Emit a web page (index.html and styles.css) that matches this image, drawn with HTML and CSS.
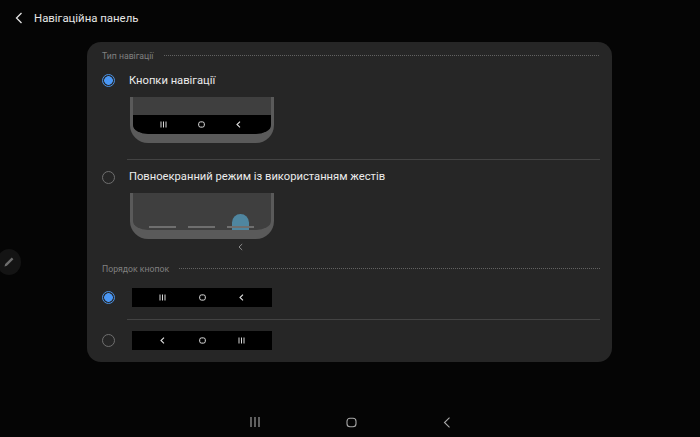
FILE: index.html
```html
<!DOCTYPE html>
<html lang="uk">
<head>
<meta charset="utf-8">
<title>Навігаційна панель</title>
<link rel="stylesheet" href="styles.css">
</head>
<body>
<div class="screen">
  <header class="topbar">
    <svg class="back" width="8" height="12" viewBox="0 0 8 12"><path d="M6.5 1 L1.5 6 L6.5 11" fill="none" stroke="#e4e4e4" stroke-width="1.3"/></svg>
    <h1 class="title">Навігаційна панель</h1>
  </header>

  <main class="card">
    <div class="section-head section-head-first"><span class="section-label">Тип навігації</span><span class="dots"></span></div>

    <div class="option">
      <span class="radio radio-on"></span>
      <span class="option-label">Кнопки навігації</span>
    </div>
    <div class="preview">
      <div class="phone">
        <div class="phone-screen"></div>
        <div class="phone-bar">
          <svg class="glyph" width="7" height="7" viewBox="0 0 7 7"><path d="M1 0.5V6.5M3.5 0.5V6.5M6 0.5V6.5" stroke="#d8d8d8" stroke-width="1"/></svg>
          <svg class="glyph" width="7" height="7" viewBox="0 0 7 7"><rect x="0.7" y="0.9" width="5.6" height="5.2" rx="1.8" fill="none" stroke="#e0e0e0" stroke-width="1"/></svg>
          <svg class="glyph" width="7" height="7" viewBox="0 0 7 7"><path d="M5 0.7L2 3.5L5 6.3" fill="none" stroke="#e0e0e0" stroke-width="1.1"/></svg>
        </div>
      </div>
    </div>

    <div class="divider divider-a"></div>

    <div class="option option-second">
      <span class="radio"></span>
      <span class="option-label">Повноекранний режим із використанням жестів</span>
    </div>
    <div class="preview preview-gesture">
      <div class="phone phone-gesture">
        <span class="gesture-blob"></span>
        <div class="gesture-lines">
          <span class="gesture-line"></span>
          <span class="gesture-line"></span>
          <span class="gesture-line"></span>
        </div>
      </div>
    </div>
    <div class="gesture-hint">
      <svg width="7" height="8" viewBox="0 0 7 8"><path d="M5.2 1L2 4L5.2 7" fill="none" stroke="#8d8d8d" stroke-width="1"/></svg>
    </div>

    <div class="section-head"><span class="section-label">Порядок кнопок</span><span class="dots"></span></div>

    <div class="order-row">
      <span class="radio radio-on"></span>
      <div class="order-bar">
        <svg class="glyph" width="7" height="7" viewBox="0 0 7 7"><path d="M1 0.5V6.5M3.5 0.5V6.5M6 0.5V6.5" stroke="#d8d8d8" stroke-width="1"/></svg>
        <svg class="glyph" width="7" height="7" viewBox="0 0 7 7"><rect x="0.7" y="0.9" width="5.6" height="5.2" rx="1.8" fill="none" stroke="#e0e0e0" stroke-width="1"/></svg>
        <svg class="glyph" width="7" height="7" viewBox="0 0 7 7"><path d="M5 0.7L2 3.5L5 6.3" fill="none" stroke="#e0e0e0" stroke-width="1.1"/></svg>
      </div>
    </div>
    <div class="divider divider-b"></div>
    <div class="order-row order-row-last">
      <span class="radio"></span>
      <div class="order-bar">
        <svg class="glyph" width="7" height="7" viewBox="0 0 7 7"><path d="M5 0.7L2 3.5L5 6.3" fill="none" stroke="#e0e0e0" stroke-width="1.1"/></svg>
        <svg class="glyph" width="7" height="7" viewBox="0 0 7 7"><rect x="0.7" y="0.9" width="5.6" height="5.2" rx="1.8" fill="none" stroke="#e0e0e0" stroke-width="1"/></svg>
        <svg class="glyph" width="7" height="7" viewBox="0 0 7 7"><path d="M1 0.5V6.5M3.5 0.5V6.5M6 0.5V6.5" stroke="#d8d8d8" stroke-width="1"/></svg>
      </div>
    </div>
  </main>

  <nav class="navbar">
    <svg width="10" height="10" viewBox="0 0 10 10"><path d="M1 0V10M5 0V10M9 0V10" stroke="#a8a8a8" stroke-width="1.1"/></svg>
    <svg width="11" height="11" viewBox="0 0 11 11"><rect x="1" y="1.2" width="9" height="8.6" rx="3" fill="none" stroke="#a8a8a8" stroke-width="1.1"/></svg>
    <svg width="8" height="11" viewBox="0 0 8 11"><path d="M6.5 0.7L1.5 5.5L6.5 10.3" fill="none" stroke="#a8a8a8" stroke-width="1.1"/></svg>
  </nav>

  <div class="pen-handle">
    <svg width="12" height="12" viewBox="0 0 12 12"><path d="M1.5 10.5L2.2 8L8.8 1.6L10.4 3.2L3.9 9.8Z" fill="#6e6e6e"/></svg>
  </div>
</div>
</body>
</html>
```

FILE: styles.css
```css
* { box-sizing: border-box; }

html, body {
  margin: 0;
  padding: 0;
  background: #050505;
}

body {
  font-family: Roboto, "Noto Sans", sans-serif;
  color: #ececec;
}

.screen {
  position: relative;
  width: 700px;
  height: 437px;
  overflow: hidden;
  display: flex;
  flex-direction: column;
}

.topbar {
  height: 42px;
  padding: 0 0 6px 15px;
  display: flex;
  align-items: center;
  gap: 11px;
}

.title {
  margin: 0;
  font-size: 11.4px;
  font-weight: 400;
  color: #e6e6e6;
}

.card {
  width: 525px;
  height: 320px;
  margin-left: 87px;
  padding: 0 12px 0 15px;
  background: #262626;
  border-radius: 14px;
}

.section-head {
  height: 13px;
  display: flex;
  align-items: center;
  gap: 10px;
}

.section-head-first {
  margin-top: 7px;
}

.section-label {
  font-size: 8.7px;
  font-weight: 400;
  color: #808080;
  white-space: nowrap;
}

.dots {
  flex: 1;
  height: 1px;
  background-image: linear-gradient(to right, #626262 50%, transparent 50%);
  background-size: 2px 1px;
}

.option {
  height: 20px;
  margin-top: 8px;
  display: flex;
  align-items: center;
  gap: 14px;
}

.option-second {
  margin-top: 7px;
}

.option-label {
  font-size: 11.2px;
  line-height: 20px;
  padding-top: 2px;
  color: #ececec;
  white-space: nowrap;
}

.option-second .option-label {
  padding-top: 0;
}

.radio {
  flex: none;
  width: 13px;
  height: 13px;
  border-radius: 50%;
  border: 1px solid #6f6f6f;
}

.radio-on {
  border-color: #4a90e2;
  background: radial-gradient(circle, #4a97f5 0, #4a97f5 4px, #262626 4.6px);
}

.preview {
  margin: 7px 0 0 28px;
}

.preview-gesture {
  margin-top: 6px;
}

.phone {
  width: 144px;
  height: 46px;
  border: 3px solid #5a5a5a;
  border-top: 0;
  border-bottom-width: 9px;
  border-radius: 0 0 18px 18px;
  background: #3f3f3f;
  overflow: hidden;
}

.phone-screen {
  height: 18px;
}

.phone-bar {
  height: 19px;
  padding: 0 29px 0 27px;
  background: #000;
  display: flex;
  align-items: center;
  justify-content: space-between;
}

.glyph {
  display: block;
}

.divider {
  height: 1px;
  margin-left: 25px;
  background: #434343;
}

.divider-a {
  margin-top: 16px;
}

.divider-b {
  margin-top: 12px;
}

.phone-gesture {
  position: relative;
}

.gesture-lines {
  position: absolute;
  left: 16px;
  right: 17px;
  bottom: 0;
  display: flex;
  justify-content: space-between;
}

.gesture-line {
  width: 27px;
  height: 2px;
  margin-bottom: 2px;
  background: #6f6f6f;
}

.gesture-blob {
  position: absolute;
  left: 99px;
  bottom: 0;
  width: 17px;
  height: 16px;
  border-radius: 9px 9px 0 0;
  background: #4f86a0;
}

.gesture-hint {
  height: 8px;
  margin: 4px 0 0 135px;
  display: flex;
}

.section-head + .order-row {
  margin-top: 13px;
}

.gesture-hint + .section-head {
  margin-top: 11px;
}

.order-row {
  height: 19px;
  display: flex;
  align-items: center;
  gap: 17px;
}

.order-row-last {
  margin-top: 11px;
}

.order-bar {
  width: 140px;
  height: 19px;
  padding: 0 27px;
  background: #000;
  display: flex;
  align-items: center;
  justify-content: space-between;
}

.navbar {
  margin-top: auto;
  height: 30px;
  padding: 0 249px 0 250px;
  display: flex;
  align-items: center;
  justify-content: space-between;
}

.pen-handle {
  position: absolute;
  left: -3px;
  top: 249px;
  width: 24px;
  height: 26px;
  padding-left: 6px;
  border-radius: 50%;
  background: #141414;
  display: flex;
  align-items: center;
}
```
